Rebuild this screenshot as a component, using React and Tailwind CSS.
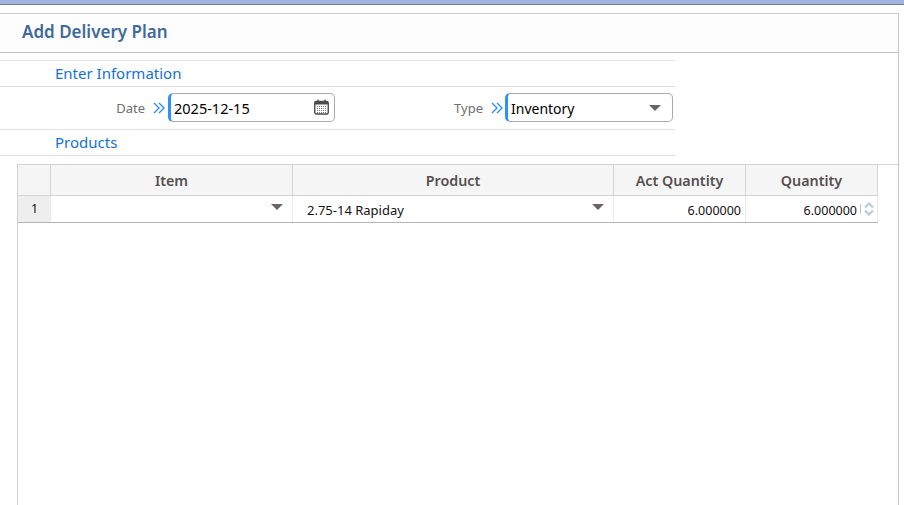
import React from "react";

const font = { fontFamily: '"Noto Sans", "Open Sans", sans-serif' };

const Caret = ({ className = "" }) => (
  <svg width="12" height="6" viewBox="0 0 12 6" className={className}>
    <path d="M0 0h12L6 6z" fill="#6b6464" />
  </svg>
);

const Chevrons = () => (
  <svg width="12" height="12" viewBox="0 0 12 12" fill="none" stroke="#2f8cf5" strokeWidth="1.4">
    <path d="M1 1l5 5-5 5M6 1l5 5-5 5" />
  </svg>
);

const CalendarIcon = () => (
  <svg width="15" height="16" viewBox="0 0 15 16" className="mr-[5px]">
    <rect x="0.75" y="2.5" width="13.5" height="12.5" rx="1.5" fill="#fff" stroke="#4a4a4a" strokeWidth="1.4" />
    <rect x="1" y="2.5" width="13" height="3" fill="#4a4a4a" />
    <path d="M4 0.5v3M11 0.5v3" stroke="#4a4a4a" strokeWidth="1.3" />
    <path d="M3 7.5h9M3 9.5h9M3 11.5h9M3 13.5h9" stroke="#777" strokeWidth="1" strokeDasharray="1 1" />
  </svg>
);

const Field = ({ label, labelClass, boxClass, children }) => (
  <div className="flex items-center">
    <span className={`pt-[2px] text-[13px] text-[#6e6e6e] text-right ${labelClass}`}>{label}</span>
    <span className="ml-[8px] mr-[3px]"><Chevrons /></span>
    <div className={`h-[29px] mb-[2px] flex items-center justify-between bg-white border border-[#aaaaaa] border-l-[3px] border-l-[#2f90f5] rounded-[5px] ${boxClass}`}>
      {children}
    </div>
  </div>
);

const HeadCell = ({ className, children }) => (
  <div className={`h-full flex items-center justify-center pt-[2px] border-r border-[#d4d4d4] text-[14.3px] font-semibold text-[#555050] ${className}`}>
    {children}
  </div>
);

const BodyCell = ({ className, children }) => (
  <div className={`h-full flex items-center border-r border-[#ececec] text-[12.5px] text-[#111] ${className}`}>
    {children}
  </div>
);

export default function App() {
  return (
    <div className="w-[904px] h-[505px] overflow-hidden bg-white" style={font}>
      <div className="h-[5px] bg-[#9fb5e0] border-b border-[#777f8c]" />
      <div className="h-[500px] w-[899px] mt-[8px] border-t border-r border-[#c9c9c9] flex flex-col">
        <div className="h-[39px] shrink-0 flex items-center pl-[22px] pb-[2px] border-b border-[#bdbdbd] bg-[#fdfdfd]">
          <h1 className="text-[17px] font-semibold text-[#3f6a9b]">Add Delivery Plan</h1>
        </div>

        <div className="w-[675px] mt-[7px] shrink-0 border-t border-[#e1e1ef]">
          <div className="h-[26px] flex items-center pl-[55px] border-b border-[#dcdce8] text-[15px] text-[#1672d2]">
            Enter Information
          </div>
          <div className="h-[43px] flex items-center border-b border-[#e2e2ea]">
            <Field label="Date" labelClass="w-[145px]" boxClass="w-[167px]">
              <span className="pl-[3px] pt-[4px] text-[14.5px] text-black">2025-12-15</span>
              <CalendarIcon />
            </Field>
            <Field label="Type" labelClass="w-[148px]" boxClass="w-[168px] -ml-px">
              <span className="pl-[3px] pt-[2px] text-[14px] text-black">Inventory</span>
              <Caret className="mr-[11px] mt-[2px]" />
            </Field>
          </div>
          <div className="h-[26px] flex items-center pl-[55px] border-b border-[#dcdce8] text-[15px] text-[#1672d2]">
            Products
          </div>
        </div>

        <div className="flex-1 ml-[17px] mt-[8px] border-t border-l border-[#d4d4d4]">
          <div className="w-[860px] h-[31px] flex bg-[#f5f5f5] border-b border-[#d4d4d4]">
            <HeadCell className="w-[33px]" />
            <HeadCell className="w-[242px]">Item</HeadCell>
            <HeadCell className="w-[321px]">Product</HeadCell>
            <HeadCell className="w-[132px]">Act Quantity</HeadCell>
            <HeadCell className="w-[132px]">Quantity</HeadCell>
          </div>
          <div className="w-[860px] h-[27px] flex border-b border-[#b5b5b5]">
            <BodyCell className="w-[33px] bg-[#eeeeee] pl-[13px] text-[#7a6f62]">1</BodyCell>
            <BodyCell className="w-[242px] justify-end pr-[9px]"><Caret className="-mt-[5px]" /></BodyCell>
            <BodyCell className="w-[321px] justify-between pl-[14px] pr-[9px]">
              <span className="text-[13px] pt-[3px]">2.75-14 Rapiday</span>
              <Caret className="-mt-[5px]" />
            </BodyCell>
            <BodyCell className="w-[132px] justify-end pr-[4px] pt-[4px]">6.000000</BodyCell>
            <BodyCell className="w-[132px] justify-end pr-[3px]">
              <span className="pt-[4px]">6.000000</span>
              <span className="w-px h-[10px] bg-[#c4c4c4] ml-[3px] mr-[3px]" />
              <svg width="10" height="14" viewBox="0 0 10 14" fill="none" stroke="#bfcbd8" strokeWidth="2.4">
                <path d="M1 5.5l4-4 4 4M1 8.5l4 4 4-4" />
              </svg>
            </BodyCell>
          </div>
        </div>
      </div>
    </div>
  );
}
